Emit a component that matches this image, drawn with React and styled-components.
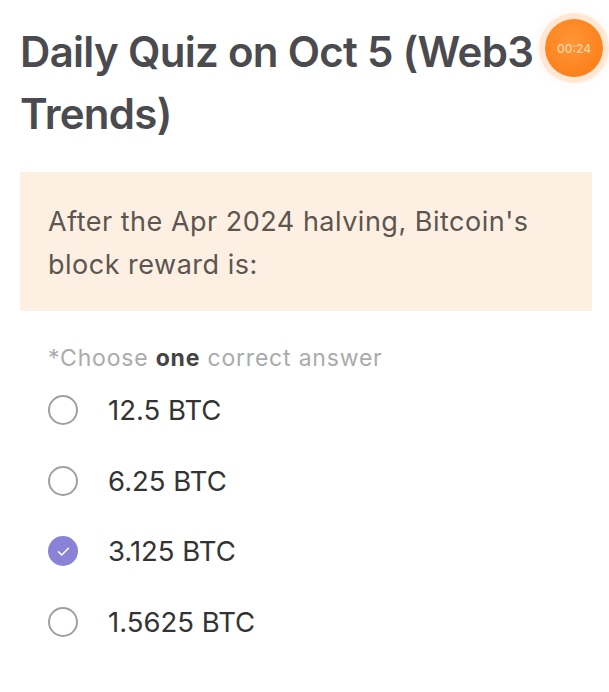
import React, { useState } from 'react';
import styled, { createGlobalStyle } from 'styled-components';

const GlobalStyle = createGlobalStyle`
  html, body {
    margin: 0;
    background: #ffffff;
  }
  body {
    font-family: Inter, "Open Sans", sans-serif;
    overflow: hidden;
  }
`;

const Page = styled.div`
  position: relative;
  width: 609px;
  height: 692px;
  padding: 21px 17px 0 20px;
  box-sizing: border-box;
`;

const Title = styled.h1`
  margin: 0;
  font-size: 42px;
  font-weight: 620;
  line-height: 62px;
  letter-spacing: -0.7px;
  color: #4a4a4f;
`;

const Timer = styled.div`
  position: absolute;
  top: 19px;
  right: 6px;
  width: 58px;
  height: 58px;
  border-radius: 50%;
  background: radial-gradient(circle at 45% 40%, #ff9636, #fb7812);
  box-shadow: 0 0 0 6px rgba(255, 196, 150, 0.3), 0 0 8px 6px rgba(255, 210, 170, 0.25);
  display: flex;
  align-items: center;
  justify-content: center;
  color: #fcd4a6;
  font-size: 12px;
  font-weight: 500;
`;

const QuestionBox = styled.div`
  margin-top: 27px;
  background: #fdf0e2;
  padding: 28px 28px 25px 28px;
  font-size: 27px;
  line-height: 43px;
  letter-spacing: 0.5px;
  color: #5c5550;
`;

const Hint = styled.div`
  margin: 35px 0 0 28px;
  font-size: 23px;
  line-height: 24px;
  letter-spacing: 0.8px;
  color: #ababab;
  b {
    color: #444;
    font-weight: 700;
  }
`;

const Options = styled.div`
  margin: 5px 0 0 28px;
  display: flex;
  flex-direction: column;
`;

const Option = styled.label`
  display: flex;
  align-items: center;
  gap: 30px;
  height: 70.5px;
  font-size: 27.5px;
  color: #333;
  cursor: pointer;
`;

const Radio = styled.span`
  width: 30px;
  height: 30px;
  border-radius: 50%;
  box-sizing: border-box;
  border: ${(p) => (p.checked ? 'none' : '2px solid #a0a0a0')};
  background: ${(p) => (p.checked ? '#8a82d6' : '#fff')};
  display: flex;
  align-items: center;
  justify-content: center;
  flex-shrink: 0;
`;

const answers = ['12.5 BTC', '6.25 BTC', '3.125 BTC', '1.5625 BTC'];

export default function App() {
  const [selected, setSelected] = useState(2);
  return (
    <>
      <GlobalStyle />
      <Page>
        <Title>Daily Quiz on Oct 5 (Web3 Trends)</Title>
        <Timer>00:24</Timer>
        <QuestionBox>After the Apr 2024 halving, Bitcoin's block reward is:</QuestionBox>
        <Hint>*Choose <b>one</b> correct answer</Hint>
        <Options>
          {answers.map((a, i) => (
            <Option key={a} onClick={() => setSelected(i)}>
              <Radio checked={selected === i}>
                {selected === i && (
                  <svg width="17" height="17" viewBox="0 0 24 24" fill="none" stroke="#fff" strokeWidth="2.2" strokeLinecap="round" strokeLinejoin="round">
                    <path d="M5 12.5l4.5 4.5L19 7.5" />
                  </svg>
                )}
              </Radio>
              {a}
            </Option>
          ))}
        </Options>
      </Page>
    </>
  );
}
